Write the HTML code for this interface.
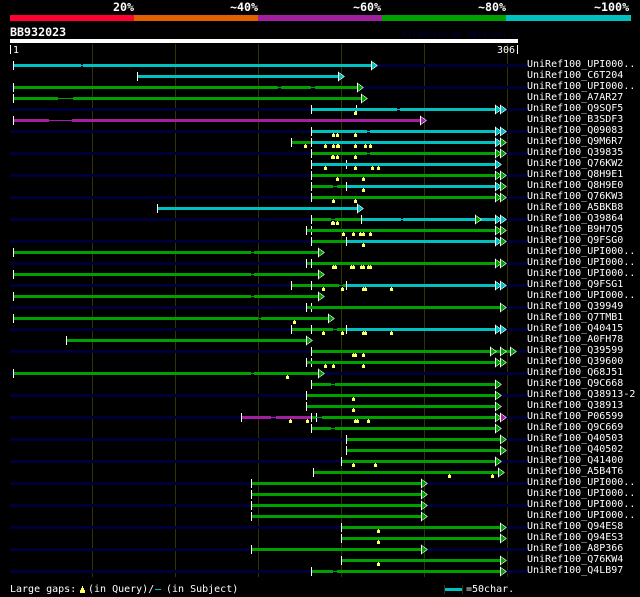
<!DOCTYPE html>
<html><head><meta charset="utf-8"><title>BB932023</title>
<style>
html,body{margin:0;padding:0;background:#000;width:640px;height:597px;overflow:hidden}
svg{display:block}
text{font-family:"DejaVu Sans Mono","Liberation Mono",monospace;font-size:10px;fill:#fff;white-space:pre}
.h{font-weight:bold;font-size:11.67px}
.xg,.xc,.xp,.g,.c,.p{fill:none}
.xg,.xc,.xp{stroke-width:3}.g,.c,.p{stroke-width:1}
.xg,.g{stroke:#00a000}.xc,.c{stroke:#00c0c0}.xp,.p{stroke:#a020a0}
.r{shape-rendering:crispEdges}
</style></head><body>
<svg width="640" height="597" viewBox="0 0 640 597" xmlns="http://www.w3.org/2000/svg">
<defs>
<rect id="b" class="r" x="10" y="-1" width="517" height="3" fill="#000038"/>
<rect id="t" class="r" x="0" y="-4" width="1" height="9" fill="#fff"/>
<g id="m" class="r" fill="#ffff66"><rect x="0" y="2" width="1" height="1"/><rect x="-1" y="3" width="3" height="3"/></g>
<g id="ag" class="r"><polygon points="0,-4.5 7,.5 0,5.5" fill="#fff"/><polygon points="1,-3.3 5.8,.5 1,4.3" fill="#00a000"/></g>
<g id="ac" class="r"><polygon points="0,-4.5 7,.5 0,5.5" fill="#fff"/><polygon points="1,-3.3 5.8,.5 1,4.3" fill="#00c0c0"/></g>
<g id="ap" class="r"><polygon points="0,-4.5 7,.5 0,5.5" fill="#fff"/><polygon points="1,-3.3 5.8,.5 1,4.3" fill="#a020a0"/></g>
</defs>
<rect width="640" height="597" fill="#000"/>
<text class="h" x="113" y="11">20%</text><text class="h" x="230" y="11">~40%</text><text class="h" x="353" y="11">~60%</text><text class="h" x="478" y="11">~80%</text><text class="h" x="594" y="11">~100%</text>
<g class="r"><rect x="10" y="15" width="124" height="6" fill="#ff0030"/><rect x="134" y="15" width="124" height="6" fill="#e06000"/><rect x="258" y="15" width="124" height="6" fill="#a020a0"/><rect x="382" y="15" width="124" height="6" fill="#00a000"/><rect x="506" y="15" width="125" height="6" fill="#00c0c0"/>
<rect x="10" y="39" width="508" height="4" fill="#fff"/><rect x="10" y="45" width="1" height="9" fill="#fff"/><rect x="517" y="45" width="1" height="9" fill="#fff"/>
<g fill="#333300"><rect x="92" y="44" width="1" height="533"/><rect x="175" y="44" width="1" height="533"/><rect x="258" y="44" width="1" height="533"/><rect x="341" y="44" width="1" height="533"/><rect x="424" y="44" width="1" height="533"/><rect x="507" y="44" width="1" height="533"/></g></g>
<text class="h" x="10" y="36">BB932023</text>
<text x="402" y="37" style="fill:#000038;font-size:8.3px">AlignView.pm Beta rel.7</text>
<text x="13" y="53">1</text><text x="497" y="53">306</text>

<g transform="translate(0,65)"><use href="#b"/><use href="#t" x="13"/><path class="xc" d="M14 .5H81M83 .5H371"/><path class="c" d="M81 .5H83"/><use href="#ac" x="371"/><text x="527" y="2">UniRef100_UPI000..</text></g>
<g transform="translate(0,76)"><use href="#t" x="137"/><path class="xc" d="M138 .5H338"/><use href="#ac" x="338"/><text x="527" y="2">UniRef100_C6T204</text></g>
<g transform="translate(0,87)"><use href="#b"/><use href="#t" x="13"/><path class="xg" d="M14 .5H278M281 .5H311M315 .5H357"/><path class="g" d="M278 .5H281M311 .5H315"/><use href="#ag" x="357"/><text x="527" y="2">UniRef100_UPI000..</text></g>
<g transform="translate(0,98)"><use href="#t" x="13"/><path class="xg" d="M14 .5H58M73 .5H361"/><path class="g" d="M58 .5H73"/><use href="#ag" x="361"/><text x="527" y="2">UniRef100_A7AR27</text></g>
<g transform="translate(0,109)"><use href="#b"/><use href="#t" x="311"/><use href="#t" x="356"/><path class="xc" d="M312 .5H397M400 .5H496"/><path class="c" d="M397 .5H400"/><use href="#ac" x="495"/><use href="#ac" x="500"/><use href="#m" x="355"/><text x="527" y="2">UniRef100_Q9SQF5</text></g>
<g transform="translate(0,120)"><use href="#t" x="13"/><path class="xp" d="M14 .5H49M72 .5H420"/><path class="p" d="M49 .5H72"/><use href="#ap" x="420"/><text x="527" y="2">UniRef100_B3SDF3</text></g>
<g transform="translate(0,131)"><use href="#b"/><use href="#t" x="311"/><path class="xc" d="M312 .5H367M370 .5H496"/><path class="c" d="M367 .5H370"/><use href="#ac" x="495"/><use href="#ac" x="500"/><use href="#m" x="333"/><use href="#m" x="337"/><use href="#m" x="355"/><text x="527" y="2">UniRef100_Q09083</text></g>
<g transform="translate(0,142)"><use href="#t" x="291"/><use href="#t" x="311"/><path class="xg" d="M292 .5H311"/><path class="xc" d="M312 .5H496"/><use href="#ac" x="495"/><use href="#ag" x="500"/><use href="#m" x="305"/><use href="#m" x="325"/><use href="#m" x="333"/><use href="#m" x="337"/><use href="#m" x="338"/><use href="#m" x="355"/><use href="#m" x="365"/><use href="#m" x="370"/><text x="527" y="2">UniRef100_Q9M6R7</text></g>
<g transform="translate(0,153)"><use href="#b"/><use href="#t" x="311"/><path class="xg" d="M312 .5H367M370 .5H496"/><path class="g" d="M367 .5H370"/><use href="#ag" x="495"/><use href="#ag" x="500"/><use href="#m" x="332"/><use href="#m" x="333"/><use href="#m" x="337"/><use href="#m" x="355"/><text x="527" y="2">UniRef100_Q39835</text></g>
<g transform="translate(0,164)"><use href="#t" x="311"/><use href="#t" x="346"/><path class="xc" d="M312 .5H496"/><use href="#ac" x="495"/><use href="#m" x="325"/><use href="#m" x="355"/><use href="#m" x="372"/><use href="#m" x="378"/><text x="527" y="2">UniRef100_Q76KW2</text></g>
<g transform="translate(0,175)"><use href="#b"/><use href="#t" x="311"/><path class="xg" d="M312 .5H496"/><use href="#ag" x="495"/><use href="#ag" x="500"/><use href="#m" x="337"/><use href="#m" x="363"/><text x="527" y="2">UniRef100_Q8H9E1</text></g>
<g transform="translate(0,186)"><use href="#t" x="311"/><use href="#t" x="346"/><path class="xg" d="M312 .5H333M337 .5H346"/><path class="g" d="M333 .5H337"/><path class="xc" d="M347 .5H496"/><use href="#ac" x="495"/><use href="#ag" x="500"/><use href="#m" x="363"/><text x="527" y="2">UniRef100_Q8H9E0</text></g>
<g transform="translate(0,197)"><use href="#b"/><use href="#t" x="311"/><path class="xg" d="M312 .5H496"/><use href="#ag" x="495"/><use href="#ag" x="500"/><use href="#m" x="333"/><use href="#m" x="355"/><text x="527" y="2">UniRef100_Q76KW3</text></g>
<g transform="translate(0,208)"><use href="#t" x="157"/><path class="xc" d="M158 .5H357"/><use href="#ac" x="357"/><text x="527" y="2">UniRef100_A5BKB8</text></g>
<g transform="translate(0,219)"><use href="#b"/><use href="#t" x="311"/><use href="#t" x="361"/><path class="xg" d="M312 .5H331M335 .5H361"/><path class="g" d="M331 .5H335"/><path class="xc" d="M362 .5H401M403 .5H496"/><path class="c" d="M401 .5H403"/><use href="#ag" x="475"/><use href="#ac" x="495"/><use href="#ac" x="500"/><use href="#m" x="332"/><use href="#m" x="333"/><use href="#m" x="337"/><text x="527" y="2">UniRef100_Q39864</text></g>
<g transform="translate(0,230)"><use href="#t" x="306"/><use href="#t" x="311"/><path class="xg" d="M307 .5H496"/><use href="#ag" x="495"/><use href="#ag" x="500"/><use href="#m" x="343"/><use href="#m" x="353"/><use href="#m" x="360"/><use href="#m" x="363"/><use href="#m" x="370"/><text x="527" y="2">UniRef100_B9H7Q5</text></g>
<g transform="translate(0,241)"><use href="#b"/><use href="#t" x="311"/><use href="#t" x="346"/><path class="xg" d="M312 .5H346"/><path class="xc" d="M347 .5H496"/><use href="#ac" x="495"/><use href="#ag" x="500"/><use href="#m" x="363"/><text x="527" y="2">UniRef100_Q9FSG0</text></g>
<g transform="translate(0,252)"><use href="#t" x="13"/><path class="xg" d="M14 .5H251M254 .5H318"/><path class="g" d="M251 .5H254"/><use href="#ag" x="318"/><text x="527" y="2">UniRef100_UPI000..</text></g>
<g transform="translate(0,263)"><use href="#b"/><use href="#t" x="306"/><use href="#t" x="311"/><path class="xg" d="M307 .5H311M312 .5H496"/><use href="#ag" x="495"/><use href="#ag" x="500"/><use href="#m" x="333"/><use href="#m" x="335"/><use href="#m" x="351"/><use href="#m" x="353"/><use href="#m" x="361"/><use href="#m" x="363"/><use href="#m" x="368"/><use href="#m" x="370"/><text x="527" y="2">UniRef100_UPI000..</text></g>
<g transform="translate(0,274)"><use href="#t" x="13"/><path class="xg" d="M14 .5H251M254 .5H318"/><path class="g" d="M251 .5H254"/><use href="#ag" x="318"/><text x="527" y="2">UniRef100_UPI000..</text></g>
<g transform="translate(0,285)"><use href="#b"/><use href="#t" x="291"/><use href="#t" x="311"/><use href="#t" x="346"/><path class="xg" d="M292 .5H311M312 .5H339M343 .5H346"/><path class="g" d="M339 .5H343"/><path class="xc" d="M347 .5H496"/><use href="#ac" x="495"/><use href="#ac" x="500"/><use href="#m" x="323"/><use href="#m" x="342"/><use href="#m" x="363"/><use href="#m" x="365"/><use href="#m" x="391"/><text x="527" y="2">UniRef100_Q9FSG1</text></g>
<g transform="translate(0,296)"><use href="#t" x="13"/><path class="xg" d="M14 .5H251M254 .5H318"/><path class="g" d="M251 .5H254"/><use href="#ag" x="318"/><text x="527" y="2">UniRef100_UPI000..</text></g>
<g transform="translate(0,307)"><use href="#b"/><use href="#t" x="306"/><use href="#t" x="311"/><path class="xg" d="M307 .5H500"/><use href="#ag" x="500"/><text x="527" y="2">UniRef100_Q39949</text></g>
<g transform="translate(0,318)"><use href="#t" x="13"/><path class="xg" d="M14 .5H258M261 .5H328"/><path class="g" d="M258 .5H261"/><use href="#ag" x="328"/><use href="#m" x="294"/><text x="527" y="2">UniRef100_Q7TMB1</text></g>
<g transform="translate(0,329)"><use href="#b"/><use href="#t" x="291"/><use href="#t" x="311"/><use href="#t" x="346"/><path class="xg" d="M292 .5H311M312 .5H333M337 .5H346"/><path class="g" d="M333 .5H337"/><path class="xc" d="M347 .5H500"/><use href="#ac" x="495"/><use href="#ac" x="500"/><use href="#m" x="323"/><use href="#m" x="342"/><use href="#m" x="363"/><use href="#m" x="365"/><use href="#m" x="391"/><text x="527" y="2">UniRef100_Q40415</text></g>
<g transform="translate(0,340)"><use href="#t" x="66"/><path class="xg" d="M67 .5H306"/><use href="#ag" x="306"/><text x="527" y="2">UniRef100_A0FH78</text></g>
<g transform="translate(0,351)"><use href="#b"/><use href="#t" x="311"/><path class="xg" d="M312 .5H510"/><use href="#ag" x="490"/><use href="#ag" x="500"/><use href="#ag" x="510"/><use href="#m" x="353"/><use href="#m" x="355"/><use href="#m" x="363"/><text x="527" y="2">UniRef100_Q39599</text></g>
<g transform="translate(0,362)"><use href="#t" x="306"/><use href="#t" x="311"/><path class="xg" d="M307 .5H496"/><use href="#ag" x="495"/><use href="#ag" x="500"/><use href="#m" x="325"/><use href="#m" x="333"/><use href="#m" x="363"/><text x="527" y="2">UniRef100_Q39600</text></g>
<g transform="translate(0,373)"><use href="#b"/><use href="#t" x="13"/><path class="xg" d="M14 .5H251M254 .5H318"/><path class="g" d="M251 .5H254"/><use href="#ag" x="318"/><use href="#m" x="287"/><text x="527" y="2">UniRef100_Q68J51</text></g>
<g transform="translate(0,384)"><use href="#t" x="311"/><path class="xg" d="M312 .5H331M335 .5H495"/><path class="g" d="M331 .5H335"/><use href="#ag" x="495"/><text x="527" y="2">UniRef100_Q9C668</text></g>
<g transform="translate(0,395)"><use href="#b"/><use href="#t" x="306"/><path class="xg" d="M307 .5H495"/><use href="#ag" x="495"/><use href="#m" x="353"/><text x="527" y="2">UniRef100_Q38913-2</text></g>
<g transform="translate(0,406)"><use href="#t" x="306"/><path class="xg" d="M307 .5H495"/><use href="#ag" x="495"/><use href="#m" x="353"/><text x="527" y="2">UniRef100_Q38913</text></g>
<g transform="translate(0,417)"><use href="#b"/><use href="#t" x="241"/><use href="#t" x="311"/><use href="#t" x="316"/><path class="xp" d="M242 .5H271M276 .5H311"/><path class="p" d="M271 .5H276"/><path class="xg" d="M312 .5H316M322 .5H496"/><path class="g" d="M316 .5H322"/><use href="#ag" x="495"/><use href="#ap" x="500"/><use href="#m" x="290"/><use href="#m" x="307"/><use href="#m" x="355"/><use href="#m" x="357"/><use href="#m" x="368"/><text x="527" y="2">UniRef100_P06599</text></g>
<g transform="translate(0,428)"><use href="#t" x="311"/><path class="xg" d="M312 .5H331M335 .5H495"/><path class="g" d="M331 .5H335"/><use href="#ag" x="495"/><text x="527" y="2">UniRef100_Q9C669</text></g>
<g transform="translate(0,439)"><use href="#b"/><use href="#t" x="346"/><path class="xg" d="M347 .5H500"/><use href="#ag" x="500"/><text x="527" y="2">UniRef100_Q40503</text></g>
<g transform="translate(0,450)"><use href="#t" x="346"/><path class="xg" d="M347 .5H500"/><use href="#ag" x="500"/><text x="527" y="2">UniRef100_Q40502</text></g>
<g transform="translate(0,461)"><use href="#b"/><use href="#t" x="341"/><path class="xg" d="M342 .5H495"/><use href="#ag" x="495"/><use href="#m" x="353"/><use href="#m" x="375"/><text x="527" y="2">UniRef100_Q41400</text></g>
<g transform="translate(0,472)"><use href="#t" x="313"/><path class="xg" d="M314 .5H498"/><use href="#ag" x="498"/><use href="#m" x="449"/><use href="#m" x="492"/><text x="527" y="2">UniRef100_A5B4T6</text></g>
<g transform="translate(0,483)"><use href="#b"/><use href="#t" x="251"/><path class="xg" d="M252 .5H421"/><use href="#ag" x="421"/><text x="527" y="2">UniRef100_UPI000..</text></g>
<g transform="translate(0,494)"><use href="#t" x="251"/><path class="xg" d="M252 .5H421"/><use href="#ag" x="421"/><text x="527" y="2">UniRef100_UPI000..</text></g>
<g transform="translate(0,505)"><use href="#b"/><use href="#t" x="251"/><path class="xg" d="M252 .5H421"/><use href="#ag" x="421"/><text x="527" y="2">UniRef100_UPI000..</text></g>
<g transform="translate(0,516)"><use href="#t" x="251"/><path class="xg" d="M252 .5H421"/><use href="#ag" x="421"/><text x="527" y="2">UniRef100_UPI000..</text></g>
<g transform="translate(0,527)"><use href="#b"/><use href="#t" x="341"/><path class="xg" d="M342 .5H500"/><use href="#ag" x="500"/><use href="#m" x="378"/><text x="527" y="2">UniRef100_Q94ES8</text></g>
<g transform="translate(0,538)"><use href="#t" x="341"/><path class="xg" d="M342 .5H500"/><use href="#ag" x="500"/><use href="#m" x="378"/><text x="527" y="2">UniRef100_Q94ES3</text></g>
<g transform="translate(0,549)"><use href="#b"/><use href="#t" x="251"/><path class="xg" d="M252 .5H421"/><use href="#ag" x="421"/><text x="527" y="2">UniRef100_A8P366</text></g>
<g transform="translate(0,560)"><use href="#t" x="341"/><path class="xg" d="M342 .5H500"/><use href="#ag" x="500"/><use href="#m" x="378"/><text x="527" y="2">UniRef100_Q76KW4</text></g>
<g transform="translate(0,571)"><use href="#b"/><use href="#t" x="311"/><path class="xg" d="M312 .5H333M337 .5H500"/><path class="g" d="M333 .5H337"/><use href="#ag" x="500"/><text x="527" y="2">UniRef100_Q4LB97</text></g>

<text x="10" y="592">Large gaps:</text>
<g class="r" fill="#ffff66"><rect x="82" y="586" width="1" height="2"/><rect x="81" y="588" width="3" height="2"/><rect x="80" y="590" width="5" height="3"/></g>
<text x="88" y="592">(in Query)/</text>
<rect class="r" x="155" y="589" width="6" height="1" fill="#00c0c0"/>
<text x="166" y="592">(in Subject)</text>
<g class="r"><rect x="444" y="585" width="1" height="9" fill="#333300"/><rect x="462" y="585" width="1" height="9" fill="#333300"/><rect x="445" y="588" width="17" height="3" fill="#00c0c0"/></g>
<text x="466" y="592">=50char.</text>
</svg>
</body></html>
